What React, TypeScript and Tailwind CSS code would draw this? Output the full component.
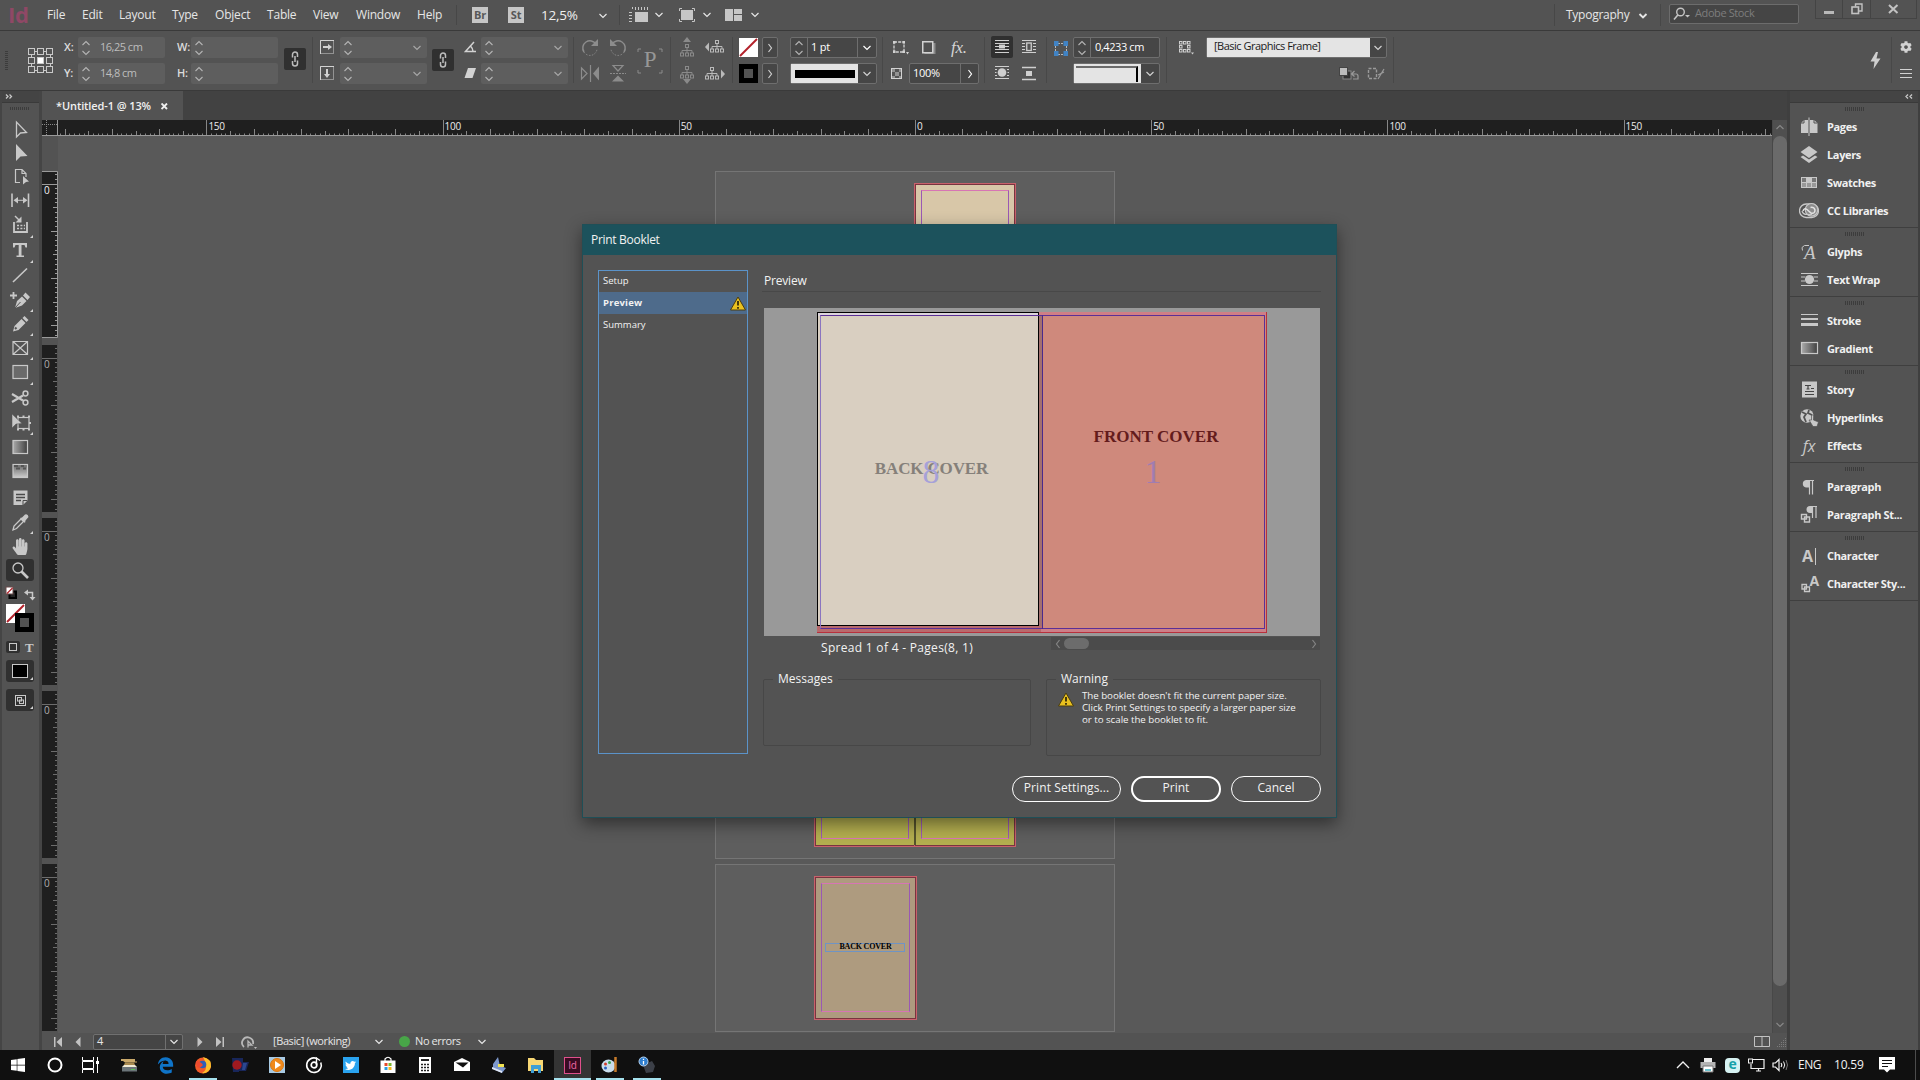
import type { ReactNode } from 'react';
import { FaCog, FaEdgeLegacy, FaHandPaper, FaTwitter, FaWindows } from 'react-icons/fa';

const UNIT = 4.724;

type IconProps = { w?: number; h?: number; className?: string; children: ReactNode };

function Icon({ w = 18, h = 18, className = '', children }: IconProps) {
  return (
    <svg width={w} height={h} viewBox={`0 0 ${w} ${h}`} fill="none" stroke="currentColor" className={`shrink-0 ${className}`}>
      {children}
    </svg>
  );
}

function Chevron({ dir = 'down', className = '' }: { dir?: 'down' | 'right' | 'left' | 'up'; className?: string }) {
  const paths = {
    down: 'M1.5 3 L5 6.5 L8.5 3',
    up: 'M1.5 7 L5 3.5 L8.5 7',
    right: 'M3.5 1 L6.5 5 L3.5 9',
    left: 'M6.5 1 L3.5 5 L6.5 9',
  };
  return (
    <Icon w={10} h={10} className={className}>
      <path d={paths[dir]} strokeWidth="1.2" />
    </Icon>
  );
}

function Stepper() {
  return (
    <Icon w={10} h={18} className="text-[#b4b4b4]">
      <path d="M1.5 6 L5 2.5 L8.500 6 M1.5 12 L5 15.500 L8.500 12" strokeWidth="1.1" />
    </Icon>
  );
}

function Sep({ className = '' }: { className?: string }) {
  return <div className={`h-[46px] w-px shrink-0 bg-[#484848] ${className}`} />;
}

/* ---------- application bar ---------- */

const menus = [
  { label: 'File', w: 'w-[35px]' },
  { label: 'Edit', w: 'w-[37px]' },
  { label: 'Layout', w: 'w-[53px]' },
  { label: 'Type', w: 'w-[43px]' },
  { label: 'Object', w: 'w-[52px]' },
  { label: 'Table', w: 'w-[46px]' },
  { label: 'View', w: 'w-[43px]' },
  { label: 'Window', w: 'w-[61px]' },
  { label: 'Help', w: 'w-[39px]' },
];

function MenuBar() {
  return (
    <div className="flex h-[31px] shrink-0 items-center border-b border-[#3a3a3a] text-[12px] text-[#e6e6e6]">
      <div className="w-[47px] pb-[3px] pl-[8px] text-[22px] leading-none font-bold text-[#8f4866]">Id</div>
      {menus.map((m) => (
        <div key={m.label} className={`${m.w} shrink-0 whitespace-nowrap`}>
          {m.label}
        </div>
      ))}
      <div className="h-[20px] w-px bg-[#474747]" />
      <div className="ml-[15px] flex h-[16px] w-[16px] items-center justify-center bg-[#c6c6c6] text-[11px] font-bold text-[#585858]">Br</div>
      <div className="ml-[20px] flex h-[16px] w-[16px] items-center justify-center bg-[#c6c6c6] text-[11px] font-bold text-[#585858]">St</div>
      <div className="ml-[17px] w-[57px] text-[13.5px] text-[#f0f0f0]">12,5%</div>
      <Chevron className="mt-px" />
      <div className="ml-[11px] h-[20px] w-px bg-[#474747]" />
      <Icon w={20} h={16} className="ml-[9px] text-[#c6c6c6]">
        <path d="M6.500 0 V3 M9.500 0 V3 M12.500 0 V3 M15.500 0 V3 M18.500 0 V3 M0 5.500 H3 M0 8.500 H3 M0 11.500 H3 M0 14.500 H3 M3.500 2 V0" />
        <rect x="6" y="5" width="13" height="10" fill="currentColor" stroke="none" />
      </Icon>
      <Chevron className="ml-[5px]" />
      <Icon w={18} h={16} className="ml-[14px] text-[#c6c6c6]">
        <path d="M1.500 4 V1.500 H4 M14 1.500 H16.500 V4 M16.500 12 V14.500 H14 M4 14.500 H1.500 V12" />
        <rect x="3" y="3" width="12" height="10" fill="currentColor" stroke="none" />
      </Icon>
      <Chevron className="ml-[6px]" />
      <Icon w={17} h={12} className="ml-[13px] text-[#c6c6c6]">
        <path d="M0 0 H8 V12 H0 Z M9 0 H17 V5 H9 Z M9 6 H17 V12 H9 Z" fill="currentColor" stroke="none" />
      </Icon>
      <Chevron className="ml-[8px]" />

      <div className="ml-auto h-[22px] w-px bg-[#474747]" />
      <div className="ml-[11px] w-[72px] text-[12px] tracking-[-0.250px]">Typography</div>
      <Icon w={10} h={10} className="mt-px">
        <path d="M1.500 3 L5 6.500 L8.500 3" strokeWidth="1.900" />
      </Icon>
      <div className="ml-[12px] h-[22px] w-px bg-[#474747]" />
      <div className="-mt-[3px] ml-[8px] flex h-[20px] w-[130px] items-center rounded-[2px] border border-[#6c6c6c] bg-[#454545] text-[11px] text-[#7d7d7d]">
        <Icon w={18} h={14} className="ml-[3px] text-[#c4c4c4]">
          <circle cx="7.500" cy="5" r="3.800" strokeWidth="1.400" />
          <path d="M4.800 8 L1 12.500" strokeWidth="1.600" />
          <path d="M12 8 H17 L14.500 10.500 Z" fill="currentColor" stroke="none" />
        </Icon>
        <span className="ml-[4px] tracking-[-0.4px]">Adobe Stock</span>
      </div>
      <div className="mr-[3px] ml-[16px] flex h-[19px] w-[102px] self-start border border-t-0 border-[#444] text-[#c2c2c2]">
        <div className="flex w-[27px] items-end justify-center border-r border-[#444] pb-[4px]">
          <div className="h-[3px] w-[10px] bg-[#b9b9b9]" />
        </div>
        <div className="flex w-[28px] items-center justify-center border-r border-[#444]">
          <Icon w={12} h={12}>
            <path d="M4.500 3.500 V1 H11 V8 H8" strokeWidth="1.400" />
            <rect x="1" y="4" width="6.500" height="6.500" strokeWidth="1.600" />
          </Icon>
        </div>
        <div className="flex flex-1 items-center justify-center">
          <Icon w={11} h={10}>
            <path d="M1 1 L9.500 9 M9.500 1 L1 9" strokeWidth="2" />
          </Icon>
        </div>
      </div>
    </div>
  );
}

/* ---------- control panel ---------- */

function Pair({ className = '', children }: { className?: string; children: ReactNode }) {
  return <div className={`flex h-[47px] shrink-0 flex-col justify-between ${className}`}>{children}</div>;
}

function DimField({ value = '', arrow = false }: { value?: string; arrow?: boolean }) {
  return (
    <div className="flex h-[21px] w-[87px] items-center rounded-[2px] bg-[#5e5e5e] pl-[3px] text-[11px] tracking-[-0.5px] text-[#bdbdbd]">
      <Stepper />
      <span className="ml-[9px] flex-1 whitespace-nowrap">{value}</span>
      {arrow && <Chevron className="mr-[5px] text-[#a6a6a6]" />}
    </div>
  );
}

function Label({ children }: { children: ReactNode }) {
  return <div className="flex h-[21px] items-center text-[11px] font-semibold text-[#dcdcdc]">{children}</div>;
}

function LinkToggle({ className = '' }: { className?: string }) {
  return (
    <div className={`flex h-[22px] w-[22px] shrink-0 items-center justify-center rounded-[2px] bg-[#303030] ${className}`}>
      <Icon w={10} h={16} className="text-[#bdbdbd]">
        <path d="M2.500 6.500 V3.500 A2.500 2.500 0 0 1 7.500 3.500 V6 M2.500 10 V12.500 A2.500 2.500 0 0 0 7.500 12.500 V9.500 M5 5 V11" strokeWidth="1.500" />
      </Icon>
    </div>
  );
}

function Tree({ variant }: { variant: 'up' | 'down' | 'left' | 'right' }) {
  const bright = variant === 'left' || variant === 'right';
  const arrows = {
    up: 'M9 0 L13 5 H5 Z',
    down: 'M9 20 L13 15 H5 Z',
    left: 'M0 10 L4 5.500 V14.500 Z',
    right: 'M20 10 L16 5.500 V14.500 Z',
  };
  const shift = { up: 'translate(2 4)', down: 'translate(2 -1)', left: 'translate(5 0)', right: 'translate(0 0)' };
  return (
    <Icon w={20} h={20} className={bright ? 'text-[#bababa]' : 'text-[#8a8a8a]'}>
      <path d={arrows[variant]} fill="currentColor" stroke="none" />
      <g transform={shift[variant]}>
        <rect x="5.500" y="3.500" width="3" height="3" />
        <path d="M7 7 V12 M2 12 V9.500 H12 V12" />
        <rect x="0.500" y="12" width="3" height="3" />
        <rect x="5.500" y="12" width="3" height="3" />
        <rect x="10.500" y="12" width="3" height="3" />
      </g>
    </Icon>
  );
}

function WrapIcon({ kind }: { kind: 'none' | 'box' | 'object' | 'jump' }) {
  return (
    <Icon w={14} h={16} className="text-[#cfcfcf]">
      {kind === 'none' && (
        <>
          <path d="M0 1.500 H14 M0 4.500 H14 M0 7.500 H14 M0 10.500 H14 M0 13.500 H14" />
          <path d="M4 5.500 H10 V9.500 H4 Z" fill="currentColor" stroke="none" />
        </>
      )}
      {kind === 'box' && (
        <>
          <path d="M0 1.500 H14 M0 4.500 H3 M11 4.500 H14 M0 7.500 H3 M11 7.500 H14 M0 10.500 H3 M11 10.500 H14 M0 13.500 H14" />
          <rect x="4.750" y="4" width="4.500" height="7.500" strokeWidth="1.300" />
        </>
      )}
      {kind === 'object' && (
        <>
          <path d="M0 1.500 H14 M0 4.500 H2 M12 4.500 H14 M0 7.500 H1.500 M12.500 7.500 H14 M0 10.500 H2 M12 10.500 H14 M0 13.500 H14" />
          <circle cx="7" cy="7.500" r="4.300" fill="currentColor" stroke="none" />
        </>
      )}
      {kind === 'jump' && (
        <>
          <path d="M0 1.500 H14 M0 13.500 H14" strokeWidth="1.500" />
          <rect x="4" y="5" width="6" height="5" fill="currentColor" stroke="none" />
        </>
      )}
    </Icon>
  );
}

function ArrowButton() {
  return (
    <div className="flex h-[21px] w-[16px] items-center justify-center rounded-[2px] border border-[#6e6e6e] bg-[#464646] text-[#cfcfcf]">
      <Chevron dir="right" />
    </div>
  );
}

function StyleIcon() {
  return (
    <Icon w={16} h={15} className="text-[#cfcfcf]">
      {[1.5, 5.5, 9.5].map((y) =>
        [1.5, 5.5, 9.5].map((x) => (x === 5.5 && y === 5.5 ? null : <rect key={`${x}-${y}`} x={x} y={y} width="2.500" height="2.500" />)),
      )}
      <path d="M13 12.500 H16 L14.500 14.500 Z" fill="currentColor" stroke="none" />
    </Icon>
  );
}

function ControlBar() {
  return (
    <div className="flex h-[60px] shrink-0 items-start border-b border-[#3a3a3a] pt-[6px] text-[#d2d2d2]">
      <div className="mt-[14px] ml-[5px] h-[20px] w-[3px] bg-[repeating-linear-gradient(#3c3c3c_0_1px,transparent_1px_2px)]" />
      <Icon w={26} h={26} className="mt-[11px] ml-[20px] text-[#c9c9c9]">
        <path d="M7 3.500 H10 M16 3.500 H19 M7 22.500 H10 M16 22.500 H19 M3.500 7 V10 M3.500 16 V19 M22.500 7 V10 M22.500 16 V19" />
        {[0.5, 9.5, 18.5].map((y) =>
          [0.5, 9.5, 18.5].map((x) => (
            <rect key={`${x}-${y}`} x={x} y={y} width="6" height="6" fill={x === 9.5 && y === 9.5 ? '#fff' : 'none'} />
          )),
        )}
      </Icon>
      <Pair className="ml-[10px] w-[14px]">
        <Label>X:</Label>
        <Label>Y:</Label>
      </Pair>
      <Pair>
        <DimField value="16,25 cm" />
        <DimField value="14,8 cm" />
      </Pair>
      <Pair className="ml-[12px] w-[14px]">
        <Label>W:</Label>
        <Label>H:</Label>
      </Pair>
      <Pair>
        <DimField />
        <DimField />
      </Pair>
      <LinkToggle className="mt-[11px] ml-[6px]" />
      <Sep className="ml-[6px]" />
      <Pair className="ml-[7px] w-[20px] py-[3px]">
        <Icon w={15} h={15}>
          <rect x="0.500" y="0.500" width="13" height="13" strokeDasharray="1 1" />
          <path d="M0.500 14 V0.500 H14" />
          <path d="M3 7 H9" strokeWidth="2" />
          <path d="M8 4 L12 7 L8 10 Z" fill="currentColor" stroke="none" />
        </Icon>
        <Icon w={15} h={15}>
          <rect x="0.500" y="0.500" width="13" height="13" strokeDasharray="1 1" />
          <path d="M0.500 14 V0.500 H14" />
          <path d="M7 3 V9" strokeWidth="2" />
          <path d="M4 8 L7 12 L10 8 Z" fill="currentColor" stroke="none" />
        </Icon>
      </Pair>
      <Pair>
        <DimField arrow />
        <DimField arrow />
      </Pair>
      <LinkToggle className="mt-[12px] ml-[5px]" />
      <Pair className="ml-[10px] w-[17px] py-[4px]">
        <Icon w={13} h={13}>
          <path d="M10 1 L1.500 10.500 H12 M6.500 5 Q9 7.500 9 10.500" strokeWidth="1.500" />
        </Icon>
        <Icon w={13} h={13}>
          <path d="M4 1 H12 L8.500 11 H0.500 Z" fill="currentColor" stroke="none" />
        </Icon>
      </Pair>
      <Pair>
        <DimField arrow />
        <DimField arrow />
      </Pair>
      <Sep className="ml-[5px]" />
      <Pair className="ml-[6px] w-[20px]">
        <Icon w={20} h={21} className="text-[#8c8c8c]">
          <path d="M16 7 A7 7 0 1 0 4 15" strokeWidth="1.500" />
          <path d="M4 15 A7 7 0 0 0 17 12" strokeDasharray="1.500 1.500" />
          <path d="M18 2 V9 H11 Z" fill="currentColor" stroke="none" />
        </Icon>
        <Icon w={20} h={21} className="text-[#8c8c8c]">
          <path d="M1.500 5 L7 10.500 L1.500 16 Z M10.500 2 V19" strokeWidth="1.200" />
          <path d="M19 3.500 V17.500 L13 10.500 Z" fill="currentColor" stroke="none" />
        </Icon>
      </Pair>
      <Pair className="ml-[8px] w-[20px]">
        <Icon w={20} h={21} className="text-[#8c8c8c]">
          <path d="M4 7 A7 7 0 1 1 16 15" strokeWidth="1.500" />
          <path d="M16 15 A7 7 0 0 1 3 12" strokeDasharray="1.500 1.500" />
          <path d="M2 2 V9 H9 Z" fill="currentColor" stroke="none" />
        </Icon>
        <Icon w={20} h={21} className="text-[#8c8c8c]">
          <path d="M5 2.500 H15 L10 8 Z" strokeWidth="1.200" />
          <path d="M2 10.500 H18" strokeDasharray="2 1" />
          <path d="M4 18.500 H16 L10 12.500 Z" fill="currentColor" stroke="none" />
        </Icon>
      </Pair>
      <div className="relative mt-[11px] ml-[9px] flex h-[26px] w-[26px] items-center justify-center pb-[2px] font-['Liberation_Serif',serif] text-[23px] text-[#979797]">
        P
        <Icon w={26} h={26} className="absolute inset-0 text-[#8c8c8c]">
          <path d="M1 4 V1 H4 M22 1 H25 V4 M25 22 V25 H22 M4 25 H1 V22" />
        </Icon>
      </div>
      <Sep className="ml-[7px]" />
      <Pair className="ml-[7px]">
        <Tree variant="up" />
        <Tree variant="down" />
      </Pair>
      <Pair className="ml-[7px]">
        <Tree variant="left" />
        <Tree variant="right" />
      </Pair>
      <Sep className="ml-[7px]" />
      <Pair className="ml-[6px] py-px">
        <Icon w={19} h={19}>
          <rect width="19" height="19" fill="#fff" stroke="none" />
          <path d="M1 18 L18 1" stroke="#b3222b" strokeWidth="2" />
        </Icon>
        <div className="flex h-[19px] w-[19px] items-center justify-center bg-black">
          <div className="h-[9px] w-[9px] bg-[#535353]" />
        </div>
      </Pair>
      <Pair className="ml-[4px]">
        <ArrowButton />
        <ArrowButton />
      </Pair>
      <Pair className="ml-[12px]">
        <div className="flex h-[21px] w-[87px] items-center rounded-[2px] border border-[#6e6e6e] bg-[#464646] text-[11px] text-white">
          <div className="flex h-full w-[17px] items-center justify-center border-r border-[#6e6e6e]">
            <Stepper />
          </div>
          <span className="ml-[3px] flex-1">1 pt</span>
          <div className="flex h-full w-[19px] items-center justify-center border-l border-[#6e6e6e]">
            <Chevron />
          </div>
        </div>
        <div className="flex h-[21px] w-[87px] items-center rounded-[2px] border border-[#6e6e6e] bg-[#464646]">
          <div className="flex h-full w-[67px] items-center justify-center bg-[#e4e4e4]">
            <div className="h-[8px] w-[60px] bg-black" />
          </div>
          <div className="flex flex-1 justify-center">
            <Chevron />
          </div>
        </div>
      </Pair>
      <Sep className="ml-[5px]" />
      <div className="ml-[8px] flex h-[47px] w-[90px] flex-col justify-between">
        <div className="flex h-[21px] items-center">
          <Icon w={18} h={16} className="ml-px">
            <rect x="2" y="2" width="10" height="10" strokeWidth="1.300" strokeDasharray="3 1.200" />
            <path d="M1 1 H3.500 V3.500 H1 Z M10.500 1 H13 V3.500 H10.500 Z M1 10.500 H3.500 V13 H1 Z M10.500 10.500 H13 V13 H10.500 Z" fill="currentColor" stroke="none" />
            <path d="M14 12 H17 L15.500 14.500 Z" fill="currentColor" stroke="none" />
          </Icon>
          <Icon w={16} h={16} className="ml-[11px]">
            <rect x="3.500" y="3" width="11" height="11" fill="#8a8a8a" stroke="none" />
            <rect x="1.750" y="1.750" width="10" height="11" strokeWidth="1.500" fill="#505050" />
          </Icon>
          <span className="ml-[14px] font-['Liberation_Serif',serif] text-[17px] leading-none text-[#d6d6d6] italic">fx.</span>
        </div>
        <div className="flex h-[21px] items-center">
          <Icon w={11} h={11}>
            <path d="M0 0 H4 V4 H0 Z M8 0 H11 V4 H8 Z M4 4 H8 V8 H4 Z M0 8 H4 V11 H0 Z M8 8 H11 V11 H8 Z" fill="currentColor" stroke="none" opacity="0.500" />
            <rect x="0.500" y="0.500" width="10" height="10" />
          </Icon>
          <div className="ml-[7px] flex h-[21px] w-[70px] items-center rounded-[2px] border border-[#6e6e6e] bg-[#464646] pl-[3px] text-[11px] tracking-[-0.300px] text-white">
            <span className="flex-1">100%</span>
            <div className="flex h-full w-[18px] items-center justify-center border-l border-[#6e6e6e]">
              <Chevron dir="right" />
            </div>
          </div>
        </div>
      </div>
      <Sep className="ml-[3px]" />
      <Pair className="-mt-px ml-[6px]">
        <div className="flex h-[22px] w-[22px] items-center justify-center rounded-[2px] bg-[#303030]">
          <WrapIcon kind="none" />
        </div>
        <div className="flex h-[21px] items-center justify-center">
          <WrapIcon kind="object" />
        </div>
      </Pair>
      <Pair className="ml-[9px] pt-[2px] pb-[2px]">
        <WrapIcon kind="box" />
        <WrapIcon kind="jump" />
      </Pair>
      <Sep className="ml-[10px]" />
      <Icon w={16} h={16} className="mt-[4px] ml-[6px]">
        <path d="M5 2.500 H11 M5 13.500 H11 M2.500 5 V11 M13.500 5 V11" stroke="#b9b9b9" strokeDasharray="2 1" />
        <path d="M1 0 H5.500 V5 H1 Z M10.500 0 H15 V5 H10.500 Z M1 10 H5.500 V15 H1 Z M10.500 10 H15 V15 H10.500 Z" fill="#4183c4" stroke="none" />
      </Icon>
      <Pair className="ml-[4px]">
        <div className="flex h-[21px] w-[87px] items-center rounded-[2px] border border-[#6e6e6e] bg-[#464646] text-[11px] text-white">
          <div className="flex h-full w-[17px] items-center justify-center border-r border-[#6e6e6e]">
            <Stepper />
          </div>
          <span className="ml-[4px] tracking-[-0.4px] whitespace-nowrap">0,4233 cm</span>
        </div>
        <div className="flex h-[21px] w-[87px] items-center rounded-[2px] border border-[#6e6e6e] bg-[#464646]">
          <div className="h-full w-[67px] bg-[#e4e4e4] pt-[2px] pl-[2px]">
            <div className="h-[16px] w-[62px] border-t-2 border-r-2 border-t-[#6b6b6b] border-r-black" />
          </div>
          <div className="flex flex-1 justify-center">
            <Chevron />
          </div>
        </div>
      </Pair>
      <Sep className="ml-[6px]" />
      <div className="mt-[3px] ml-[11px]">
        <StyleIcon />
      </div>
      <div className="ml-[12px] flex h-[47px] w-[181px] flex-col justify-between">
        <div className="flex h-[21px] items-center rounded-[2px] border border-[#6e6e6e] bg-[#464646]">
          <div className="flex h-full w-[163px] items-center bg-[#e4e4e4] pb-[2px] pl-[7px] text-[11px] tracking-[-0.5px] text-[#1a1a1a]">[Basic Graphics Frame]</div>
          <div className="flex flex-1 justify-center">
            <Chevron />
          </div>
        </div>
        <div className="flex h-[21px] items-center justify-end gap-[8px] pr-[2px] text-[#9a9a9a]">
          <Icon w={20} h={14}>
            <rect x="4" y="4" width="8" height="8" fill="#333" stroke="#888" />
            <rect x="0.500" y="0.500" width="8" height="8" fill="#bdbdbd" stroke="#444" />
            <path d="M13 7 H17 Q19 7 19 9 V12 H14 M15.500 4 L12.500 7 L15.500 9.500" strokeWidth="1.200" />
          </Icon>
          <Icon w={18} h={14}>
            <rect x="1.500" y="1.500" width="8" height="10" strokeWidth="1.400" strokeDasharray="3 1.500" />
            <path d="M17 2 L11 12 M11 8 L17 5" strokeWidth="1.200" />
          </Icon>
        </div>
      </div>
      <Sep className="ml-[6px]" />
      <Icon w={11} h={17} className="mt-[15px] ml-auto text-[#cfcfcf]">
        <path d="M6 0 L0.500 9.500 H4.500 L3.500 17 L10.500 6.500 H6.500 L8 0 Z" fill="currentColor" stroke="none" />
      </Icon>
      <Sep className="ml-[10px]" />
      <Pair className="mr-[8px] ml-[8px] items-center py-[4px]">
        <FaCog className="h-[12px] w-[12px]" />
        <Icon w={12} h={12}>
          <path d="M0 1.500 H12 M0 5.500 H12 M0 9.500 H12" strokeWidth="1.200" />
        </Icon>
      </Pair>
    </div>
  );
}

/* ---------- tools ---------- */

const tools: { y: string; more?: boolean; art: ReactNode }[] = [
  { y: 'h-[23px]', art: <path d="M5.500 2 V17 L9.500 13 L15.500 12.500 Z" strokeWidth="1.300" /> },
  { y: 'h-[24px]', art: <path d="M5 1 V18 L9.500 13.500 L16.500 13 Z" fill="currentColor" stroke="none" /> },
  {
    y: 'h-[24px]',
    art: (
      <>
        <path d="M9 15.500 H4.500 V2.500 H11 L15 6.500 V10 M11 2.500 V6.500 H15" strokeWidth="1.200" />
        <path d="M12 9 L18 14.500 L15 15 L12 17.500 Z" fill="currentColor" stroke="none" />
      </>
    ),
  },
  {
    y: 'h-[24px]',
    art: (
      <>
        <path d="M1 2.500 V16 M17.500 2.500 V16" strokeWidth="1.600" />
        <path d="M4 9.300 H15" />
        <path d="M2.500 9.300 L7 6 V12.500 Z M16.500 9.300 L12 6 V12.500 Z" fill="currentColor" stroke="none" />
      </>
    ),
  },
  {
    y: 'h-[26px]',
    more: true,
    art: (
      <>
        <path d="M3 7 V17 H16 V7" strokeWidth="1.800" />
        <path d="M6 13.500 H14 M6 10.500 H14" strokeWidth="1.600" strokeDasharray="2 1.400" />
        <path d="M4 1 L8 5" strokeWidth="1.500" />
        <path d="M10.500 1.500 V7.500 H4.500 Z" fill="currentColor" stroke="none" />
      </>
    ),
  },
  {
    y: 'h-[25px]',
    more: true,
    art: <path d="M2 2 H16 V6.500 H14.500 L13.500 4 H10.500 V14.500 H13 V16 H5.500 V14.500 H7.700 V4 H4.500 L3.500 6.500 H2 Z" fill="currentColor" stroke="none" />,
  },
  { y: 'h-[25px]', art: <path d="M2 16 L16 2.500" strokeWidth="1.600" /> },
  {
    y: 'h-[24px]',
    more: true,
    art: (
      <>
        <path d="M2.500 1 V8 M-1 4.500 H6" strokeWidth="1.800" />
        <path d="M4 17 L6 10 L11 5.500 L15.500 10 L11 14.500 Z M12 4.500 L14.500 1.500 L19 6 L16.500 9 Z" fill="currentColor" stroke="none" />
        <path d="M4 17 L9.500 11" stroke="#535353" />
      </>
    ),
  },
  {
    y: 'h-[24px]',
    more: true,
    art: (
      <>
        <path d="M2 16.500 L3.500 11 L10.500 4 L14.500 8 L7.500 15 Z M11.500 3 L13.500 1 L17.500 5 L15.500 7 Z" fill="currentColor" stroke="none" />
        <path d="M4 14 L5.500 12.500" stroke="#535353" strokeWidth="2" />
      </>
    ),
  },
  { y: 'h-[24px]', more: true, art: <path d="M2 2.500 H16.500 V15.500 H2 Z M2 2.500 L16.500 15.500 M16.500 2.500 L2 15.500" strokeWidth="1.200" /> },
  { y: 'h-[25px]', more: true, art: <rect x="2" y="2.500" width="14.500" height="13" strokeWidth="1.200" fill="#6a6a6a" /> },
  {
    y: 'h-[26px]',
    art: (
      <>
        <path d="M1 6 L12 12.500 M1 14 L12 7.500" strokeWidth="2.200" />
        <circle cx="14.500" cy="5.500" r="2.400" strokeWidth="1.500" />
        <circle cx="14.500" cy="14.500" r="2.400" strokeWidth="1.500" />
      </>
    ),
  },
  {
    y: 'h-[24px]',
    more: true,
    art: (
      <>
        <rect x="7" y="3.500" width="11" height="11" strokeWidth="1.200" />
        <path d="M6 2.500 H8 M11.500 2.500 H13.500 M17 2.500 H19 M6 15.500 H8 M11.500 15.500 H13.500 M17 15.500 H19 M19 8 V10" strokeWidth="2" />
        <path d="M1 0 V14 L5 10 L11 9.500 Z" fill="currentColor" stroke="#535353" strokeWidth="0.500" />
      </>
    ),
  },
  { y: 'h-[24px]', art: <rect x="2" y="2.500" width="14.500" height="13" strokeWidth="1.200" fill="url(#grad-tool)" /> },
  {
    y: 'h-[26px]',
    art: (
      <>
        <rect x="2" y="2.500" width="14.500" height="13" strokeWidth="1.200" fill="url(#feather-tool)" />
        <path d="M3 4 H7 M10 4 H13 M5 6.500 H9 M12 6.500 H15" stroke="#555" strokeWidth="2" />
      </>
    ),
  },
  {
    y: 'h-[25px]',
    art: (
      <>
        <path d="M2.500 2.500 H16.500 V12.500 L12 17 H2.500 Z" fill="currentColor" stroke="none" />
        <path d="M5 6.500 H14 M5 9.500 H14 M5 12.500 H10" stroke="#4a4a4a" strokeWidth="1.300" />
        <path d="M12 17 V12.500 H16.500" stroke="#4a4a4a" />
      </>
    ),
  },
  {
    y: 'h-[24px]',
    more: true,
    art: (
      <>
        <path d="M2 17 L3 13 L10 6 L12.500 8.500 L5.500 15.500 Z" strokeWidth="1.300" />
        <path d="M9 5 L11 4.500 L14 1.500 Q17 0.500 17.500 4 L14.500 7.500 L14 10 Z" fill="currentColor" stroke="none" />
      </>
    ),
  },
];

function MoreMark({ className }: { className: string }) {
  return (
    <svg width="3" height="3" viewBox="0 0 3 3" className={`absolute ${className}`}>
      <path d="M3 0 V3 H0 Z" fill="#d2d2d2" />
    </svg>
  );
}

function Toolbox() {
  return (
    <div className="flex w-[42px] shrink-0 flex-col border-x-2 border-r-[3px] border-[#454545] bg-[#535353] text-[#c8c8c8]">
      <svg width="0" height="0" className="absolute">
        <defs>
          <linearGradient id="grad-tool">
            <stop offset="0" stopColor="#aaa" />
            <stop offset="1" stopColor="#404040" />
          </linearGradient>
          <linearGradient id="feather-tool" x2="0" y2="1">
            <stop offset="0" stopColor="#666" />
            <stop offset="1" stopColor="#ccc" />
          </linearGradient>
        </defs>
      </svg>
      <div className="flex h-[12px] shrink-0 items-center border-b border-[#3a3a3a] bg-[#444] pl-[3px]">
        <Icon w={8} h={7}>
          <path d="M1 1.500 L3 3.500 L1 5.500 M4.500 1.500 L6.500 3.500 L4.500 5.500" strokeWidth="1.300" />
        </Icon>
      </div>
      <div className="mt-[4px] mb-[10px] ml-[8px] h-[3px] w-[19px] shrink-0 bg-[repeating-linear-gradient(90deg,#3c3c3c_0_1px,transparent_1px_2px)]" />
      {tools.map((t, i) => (
        <div key={i} className={`relative flex shrink-0 items-start pl-[9px] ${t.y}`}>
          <Icon w={18} h={18} className="overflow-visible">
            {t.art}
          </Icon>
          {t.more && <MoreMark className="right-[6px] bottom-[3px]" />}
        </div>
      ))}
      <div className="flex h-[22px] shrink-0 items-start pt-px pl-[10px]">
        <FaHandPaper className="h-[17px] w-[16px]" />
      </div>
      <div className="ml-[4px] flex h-[22px] w-[28px] shrink-0 items-center justify-center rounded-[3px] bg-[#303030]">
        <Icon w={18} h={18}>
          <circle cx="7" cy="7" r="5" strokeWidth="1.300" />
          <path d="M10.500 10.500 L17 17" strokeWidth="2.600" />
        </Icon>
      </div>
      <div className="mt-[5px] flex shrink-0 items-start pl-[3px]">
        <Icon w={12} h={13}>
          <rect x="4.500" y="5.500" width="6.500" height="6.500" fill="#222" stroke="#000" strokeWidth="2" />
          <rect x="1" y="1" width="7" height="7" fill="#fff" stroke="#6a4a4a" />
          <path d="M2 7.500 L7.500 2" stroke="#b3222b" strokeWidth="1.300" />
        </Icon>
        <Icon w={12} h={13} className="mt-[2px] ml-[7px]">
          <path d="M3 4.500 H8.500 V10" strokeWidth="1.500" />
          <path d="M0 4.500 L4 1.500 V7.500 Z M8.500 12.500 L5.500 9 H11.500 Z" fill="currentColor" stroke="none" />
        </Icon>
      </div>
      <Icon w={28} h={28} className="mt-[3px] ml-[4px]">
        <rect width="19" height="19" fill="#fff" stroke="none" />
        <path d="M1 18 L18 1" stroke="#b3222b" strokeWidth="2" />
        <rect x="9" y="9" width="19" height="19" fill="#000" stroke="none" />
        <rect x="14" y="14" width="9" height="9" fill="#535353" stroke="none" />
      </Icon>
      <div className="mt-[9px] ml-[4px] flex h-[12px] shrink-0 items-center">
        <div className="flex h-[12px] w-[14px] items-center justify-center rounded-[2px] bg-[#303030]">
          <div className="h-[8px] w-[8px] border border-[#c8c8c8]" />
        </div>
        <span className="ml-[5px] font-['Liberation_Serif',serif] text-[13px] leading-none font-bold">T</span>
      </div>
      <div className="relative mt-[7px] ml-[4px] flex h-[22px] w-[28px] shrink-0 items-center justify-center rounded-[3px] bg-[#303030]">
        <div className="h-[14px] w-[16px] border border-[#c8c8c8] bg-black" />
        <MoreMark className="right-px bottom-[2px]" />
      </div>
      <div className="relative mt-[7px] ml-[4px] flex h-[22px] w-[28px] shrink-0 items-center justify-center rounded-[3px] bg-[#303030]">
        <Icon w={11} h={11}>
          <rect x="0.500" y="0.500" width="10" height="10" />
          <rect x="2.500" y="2.500" width="4" height="3.500" />
          <rect x="4.500" y="5" width="4" height="3.500" />
        </Icon>
        <MoreMark className="right-px bottom-[2px]" />
      </div>
    </div>
  );
}

/* ---------- rulers ---------- */

function HorizontalRuler() {
  const zero = 873.5;
  const ticks: { x: number; n: number }[] = [];
  for (let n = -181; n <= 181; n++) {
    const x = zero + n * UNIT;
    if (x > 16) ticks.push({ x, n });
  }
  return (
    <svg width="1730" height="16" className="shrink-0 bg-[#1f1f1f]">
      <path d="M0 4.500 H15 M4.500 0 V16" stroke="#8a8a8a" strokeDasharray="1 1" />
      {ticks.map(({ x, n }) => {
        const len = n % 50 === 0 ? 16 : n % 10 === 0 ? 6 : n % 5 === 0 ? 4 : 1.5;
        const px = Math.floor(x) + 0.5;
        return <path key={n} d={`M${px} 16 V${15 - len}`} stroke="#868686" />;
      })}
      {[-150, -100, -50, 0, 50, 100, 150].map((n) => (
        <text key={n} x={zero + n * UNIT + 1.5} y="9.500" fill="#ececec" fontSize="10" fontWeight="500" letterSpacing="-0.3">
          {Math.abs(n)}
        </text>
      ))}
      <path d="M0 15.500 H1730" stroke="#9a9a9a" />
      <path d="M15.500 0 V16" stroke="#9a9a9a" />
    </svg>
  );
}

const rulerBands = [171, 345, 518, 691, 864];

function VerticalRuler() {
  return (
    <svg width="16" height="897" className="shrink-0 bg-[#535353]">
      {rulerBands.map((top, i) => {
        const y = top - 136;
        const zero = y + 13;
        const color = i === 0 ? '#9a9a9a' : '#6c6c6c';
        return (
          <g key={top} stroke={color}>
            <rect x="0" y={y} width="15" height="167" fill="#1f1f1f" stroke="none" />
            {Array.from({ length: 36 }, (_, k) => {
              const n = k - 2;
              const len = n === 0 ? 15 : n % 10 === 0 ? 6 : n % 5 === 0 ? 4 : 2;
              const py = Math.floor(zero + n * UNIT) + 0.5;
              return py < y + 167 ? <path key={n} d={`M15 ${py} H${15 - len}`} /> : null;
            })}
            {i === 0 && <path d={`M0 ${y + 0.5} H15.500 V${y + 166.500} H0`} fill="none" />}
            <text x="2" y={zero + 10} fill={i === 0 ? '#f4f4f4' : '#b0b0b0'} stroke="none" fontSize="10">
              0
            </text>
          </g>
        );
      })}
    </svg>
  );
}

/* ---------- canvas ---------- */

function Page({ className, children }: { className: string; children?: ReactNode }) {
  return (
    <div className={`absolute border border-[#c8616b] ${className}`}>
      <div className="relative h-full w-full border border-[#7a3440]">
        <div className="absolute inset-x-[5px] top-[5px] bottom-[6px] border border-x-[#9a58b4] border-y-[#d775b4]" />
        {children}
      </div>
    </div>
  );
}

function Canvas() {
  return (
    <div className="relative h-[897px] flex-1 overflow-hidden bg-[#595959]">
      {/* spreads on the pasteboard */}
      <div className="absolute top-[35px] left-[657px] h-[167px] w-[400px] border border-[#757575] bg-[#5e5e5e]" />
      <Page className="top-[47px] left-[856px] h-[145px] w-[102px] bg-[#d8c7a8]" />
      <div className="absolute top-[555px] left-[657px] h-[168px] w-[400px] border border-[#757575] bg-[#5e5e5e]" />
      <Page className="top-[567px] left-[756px] h-[144px] w-[102px] bg-[#b3ae4f]" />
      <Page className="top-[567px] left-[856px] h-[144px] w-[102px] bg-[#b3ae4f]" />
      <div className="absolute top-[575px] left-[856px] h-[134px] w-[2px] bg-[#55532c]" />
      <div className="absolute top-[728px] left-[657px] h-[168px] w-[400px] border border-[#757575] bg-[#5e5e5e]" />
      <Page className="top-[740px] left-[756px] h-[144px] w-[103px] bg-[#ae9b7f]">
        <div className="absolute top-[65px] left-[9px] flex h-[9px] w-[80px] items-center justify-center border border-[#6f94c4] font-['Liberation_Serif',serif] text-[8px] leading-none font-bold whitespace-nowrap text-black">
          <span className="-mt-[2px] ml-px">BACK COVER</span>
        </div>
      </Page>
    </div>
  );
}

function StatusBar() {
  return (
    <div className="flex h-[17px] shrink-0 items-center bg-[#535353] text-[11px] tracking-[-0.3px] text-[#e6e6e6]">
      <Icon w={9} h={10} className="ml-[11px] text-[#c2c2c2]">
        <path d="M1 0 H2.500 V10 H1 Z M9 0 V10 L3.500 5 Z" fill="currentColor" stroke="none" />
      </Icon>
      <Icon w={6} h={10} className="ml-[13px] text-[#c2c2c2]">
        <path d="M5.500 0 V10 L0.500 5 Z" fill="currentColor" stroke="none" />
      </Icon>
      <div className="ml-[12px] flex h-[16px] w-[90px] items-center rounded-[2px] border border-[#707070] bg-[#454545] pl-[3px]">
        <span className="flex-1">4</span>
        <div className="flex h-full w-[17px] items-center justify-center border-l border-[#707070]">
          <Chevron />
        </div>
      </div>
      <Icon w={6} h={10} className="ml-[14px] text-[#c2c2c2]">
        <path d="M0.500 0 V10 L5.500 5 Z" fill="currentColor" stroke="none" />
      </Icon>
      <Icon w={9} h={10} className="ml-[13px] text-[#c2c2c2]">
        <path d="M0 0 V10 L5.500 5 Z M6.500 0 H8 V10 H6.500 Z" fill="currentColor" stroke="none" />
      </Icon>
      <Icon w={18} h={14} className="ml-[15px] text-[#b8b8b8]">
        <path d="M4 12 A5.500 5.500 0 1 1 13 9" strokeWidth="1.800" />
        <path d="M8 12.500 V6 L12 10 H8" strokeWidth="1.300" />
        <path d="M14 12 H17 L15.500 14 Z" fill="currentColor" stroke="none" />
      </Icon>
      <span className="ml-[15px] w-[101px] tracking-[-0.400px] whitespace-nowrap">[Basic] (working)</span>
      <Chevron />
      <div className="ml-[15px] h-[11px] w-[11px] rounded-full bg-[#48a548]" />
      <span className="ml-[5px] w-[62px] tracking-[-0.400px] whitespace-nowrap">No errors</span>
      <Chevron />
      <Icon w={16} h={11} className="mr-[6px] ml-auto text-[#c2c2c2]">
        <path d="M0.500 0.500 H15.500 V10.500 H0.500 Z M8 0.500 V10.500" />
      </Icon>
      <Icon w={10} h={10} className="mr-px text-[#7b7b7b]">
        <path d="M1 9.500 H10 M3 7.500 H10 M5 5.500 H10 M7 3.500 H10 M9 1.500 H10" strokeDasharray="1 1" />
      </Icon>
    </div>
  );
}

/* ---------- panel dock ---------- */

const panelIcons: Record<string, ReactNode> = {
  Pages: (
    <>
      <path d="M2 6 L5 3 H9 V16 H2 Z M11 3 H15 L18.500 6 V16 H11 Z" fill="currentColor" stroke="none" />
      <path d="M10 0.500 V19" />
      <path d="M2 6 H5 V3 M18.500 6 H15 V3" stroke="#535353" />
    </>
  ),
  Layers: (
    <>
      <path d="M10 1 L18.500 7 L10 13 L1.500 7 Z" fill="currentColor" stroke="none" />
      <path d="M1.500 12 L4 10.500 L10 14.500 L16 10.500 L18.500 12 L10 18 Z" fill="currentColor" stroke="none" />
    </>
  ),
  Swatches: (
    <>
      <rect x="2.500" y="4.500" width="15" height="10" fill="#999" />
      <path d="M3 5 H7 V9 H3 Z M13 5 H17 V9 H13 Z" fill="#777" stroke="none" />
      <path d="M2.500 9.500 H17.500 M7.500 4.500 V14.500 M12.500 9.500 V14.500" />
      <rect x="8" y="5" width="5" height="4" fill="currentColor" stroke="none" />
    </>
  ),
  'CC Libraries': (
    <>
      <rect x="0.500" y="3" width="19" height="13.500" rx="6.700" strokeWidth="1.300" />
      <circle cx="12.500" cy="8.800" r="6.300" strokeWidth="1.200" fill="#8c8c8c" />
      <path d="M4 10 Q5 6.500 8 8.500 L12 12 Q16 13 16 9 Q15 5.500 11.500 6.500" strokeWidth="1.500" stroke="#e2e2e2" />
      <path d="M3 10 Q4 13.500 8 13.500 H13" strokeWidth="1.200" />
    </>
  ),
  'Text Wrap': (
    <>
      <path d="M2 3.500 H19 M2 7 H6 M15 7 H19 M2 11 H6 M15 11 H19 M2 15.500 H19" strokeWidth="1.200" />
      <circle cx="10.500" cy="9.500" r="4.600" fill="currentColor" stroke="none" />
    </>
  ),
  Stroke: <path d="M2 3 H19 V4 H2 Z M2 7 H19 V9 H2 Z M2 12 H19 V15 H2 Z" fill="currentColor" stroke="none" />,
  Gradient: <rect x="2.500" y="3.500" width="16" height="11" strokeWidth="1.200" fill="url(#grad-tool)" />,
  Story: (
    <>
      <rect x="3" y="1.500" width="15" height="16" fill="currentColor" stroke="none" />
      <path d="M6 5.500 H12 M9 5 V9 M7.500 9 H10.500 M12 8.500 H15 M6 11.500 H15 M6 14.500 H15" stroke="#444" strokeWidth="1.200" />
    </>
  ),
  Hyperlinks: (
    <>
      <circle cx="8" cy="8" r="6.700" fill="currentColor" stroke="none" />
      <path d="M3 4 L7 6 L5 9 L7 14 M10 2 L9 5 L13 7" stroke="#535353" strokeWidth="1.800" />
      <path d="M12.500 7 V12 L10 12 L14 18.500 H18 L19.500 14 L14.500 12 V7 Z" fill="currentColor" stroke="#535353" strokeWidth="0.700" />
    </>
  ),
  Paragraph: (
    <>
      <path d="M10 3 H7 A3.800 3.800 0 0 0 7 10.500 H10 Z" fill="currentColor" stroke="none" />
      <path d="M9 3.500 H15 M10.500 3 V17.500 M13.500 3 V17.500" strokeWidth="1.200" />
    </>
  ),
  'Paragraph St...': (
    <>
      <path d="M13 1 H11 A3.300 3.300 0 0 0 11 8 H13 Z" fill="currentColor" stroke="none" />
      <path d="M12 1.500 H18 M13.500 1 V13 M17 1 V13" strokeWidth="1.200" />
      <path d="M2.500 9.500 H7.500 V14 H2.500 Z M5.500 12 H10.500 V17 H5.500 Z" strokeWidth="1.400" fill="#535353" />
    </>
  ),
};

const panelGroups = [
  ['Pages', 'Layers', 'Swatches', 'CC Libraries'],
  ['Glyphs', 'Text Wrap'],
  ['Stroke', 'Gradient'],
  ['Story', 'Hyperlinks', 'Effects'],
  ['Paragraph', 'Paragraph St...'],
  ['Character', 'Character Sty...'],
];

function PanelIcon({ name }: { name: string }) {
  if (name === 'Glyphs')
    return (
      <span className="relative w-[20px] pl-[5px] font-['Liberation_Serif',serif] text-[19px] leading-none italic">
        A
        <Icon w={8} h={8} className="absolute top-px left-[2px]">
          <path d="M1.500 6.500 Q-0.500 3 3.500 1.500 H8" />
        </Icon>
      </span>
    );
  if (name === 'Effects') return <span className="w-[20px] text-center font-['Open_Sans',sans-serif] text-[16px] leading-none italic">fx</span>;
  if (name === 'Character')
    return (
      <span className="flex w-[20px] items-center pl-[3px] text-[16px] leading-none font-bold">
        A<span className="ml-[2px] h-[17px] w-px bg-current" />
      </span>
    );
  if (name === 'Character Sty...')
    return (
      <span className="relative flex h-[20px] w-[20px] justify-end text-[14px] leading-none font-bold">
        A
        <Icon w={10} h={10} className="absolute bottom-px left-[2px]">
          <path d="M1 1.500 H5.500 V6 H1 Z M3.500 4 H8.500 V8.500 H3.500 Z" strokeWidth="1.300" fill="#535353" />
        </Icon>
      </span>
    );
  return (
    <Icon w={20} h={20}>
      {panelIcons[name]}
    </Icon>
  );
}

function PanelDock() {
  return (
    <div className="flex w-[133px] shrink-0 flex-col border-r-2 border-l-[3px] border-[#3f3f3f] bg-[#535353]">
      <div className="flex h-[12px] items-center justify-end border-b border-[#3a3a3a] bg-[#444] pr-[5px] text-[#c8c8c8]">
        <Icon w={8} h={7}>
          <path d="M3 1.500 L1 3.500 L3 5.500 M7 1.500 L5 3.500 L7 5.500" strokeWidth="1.300" />
        </Icon>
      </div>
      {panelGroups.map((group) => (
        <div key={group[0]} className="border-b border-[#3f3f3f] pb-[2px]">
          <div className="h-[10px] pt-[4px] pl-[55px]">
            <div className="h-[4px] w-[19px] bg-[repeating-linear-gradient(90deg,#3c3c3c_0_1px,transparent_1px_2px)]" />
          </div>
          {group.map((name) => (
            <div key={name} className="flex h-[28px] items-center gap-[8px] pl-[9px] text-[#c8c8c8]">
              <PanelIcon name={name} />
              <span className="text-[11px] font-bold tracking-[-0.350px] whitespace-nowrap text-[#f0f0f0]">{name}</span>
            </div>
          ))}
        </div>
      ))}
    </div>
  );
}

/* ---------- dialog ---------- */

function WarningIcon() {
  return (
    <Icon w={16} h={15}>
      <path d="M8 1 L15.500 14 H0.500 Z" fill="#e9c11f" stroke="#4a3c10" />
      <path d="M8 5 V9.500 M8 11 V12.800" stroke="#2a2208" strokeWidth="1.700" />
    </Icon>
  );
}

function PrintBooklet() {
  return (
    <div className="absolute top-[224px] left-[582px] flex h-[594px] w-[755px] flex-col border border-[#1f4f57] bg-[#535353] text-[12px] tracking-normal text-[#f2f2f2] shadow-[0_6px_16px_rgba(0,0,0,0.450)]">
      <div className="flex h-[30px] shrink-0 items-center bg-[#1c525c] pl-[8px] tracking-[-0.300px]">Print Booklet</div>
      <div className="flex flex-1 pt-[15px] pl-[15px]">
        <div className="h-[484px] w-[150px] border border-[#5b93c9] text-[9.500px]">
          <div className="flex h-[21px] items-center pl-[4px]">Setup</div>
          <div className="flex h-[22px] items-center justify-between bg-[#4e6b8b] pr-px pl-[4px] font-bold tracking-[0.200px]">
            Preview
            <WarningIcon />
          </div>
          <div className="flex h-[22px] items-center pl-[4px]">Summary</div>
        </div>

        <div className="ml-[14px] flex w-[559px] flex-col">
          <div className="flex h-[22px] items-center border-b border-[#484848] pl-[2px] tracking-[-0.200px]">Preview</div>
          <div className="relative mt-[16px] ml-[2px] h-[328px] w-[556px] shrink-0 bg-[#999]">
            {/* spread: front cover under the trimmed back cover */}
            <div className="absolute top-[4px] left-[53px] h-[321px] w-[450px] border-r border-b border-[#b8303c] bg-[#cf897c]">
              <div className="absolute bottom-0 left-0 h-[6px] w-[225px] bg-[#b86a6c]" />
              <div className="absolute right-0 bottom-0 h-[3px] w-[225px] bg-[#cc7f88]" />
              <div className="absolute top-0 left-[222px] h-[314px] w-[3px] bg-[#a2706f]" />
              <div className="absolute top-0 left-[222px] h-[3px] w-[227px] bg-[#cf7f85]" />
            </div>
            <div className="absolute top-[4px] left-[53px] h-[314px] w-[222px] border border-black bg-[#d9cfc1]">
              <div className="h-[3px] bg-[#dcd4dc]" />
            </div>
            <div className="absolute top-[7px] left-[56px] h-[314px] w-[445px] border border-[#5b2f97] border-l-[#8a74c0]" />
            <div className="absolute top-[7px] left-[278px] h-[314px] w-px bg-[#4a2a8c]" />
            <div className="absolute top-[150px] left-[55px] w-[225px] text-center font-['Liberation_Serif',serif] text-[17px] leading-[22px] font-bold tracking-[-0.150px] text-[#85807a]">BACK COVER</div>
            <div className="absolute top-[147px] left-[56px] w-[222px] text-center font-['Liberation_Serif',serif] text-[34px] leading-[34px] text-[#a6a1d8]">8</div>
            <div className="absolute top-[118px] left-[279px] w-[226px] text-center font-['Liberation_Serif',serif] text-[17px] leading-[22px] font-bold text-[#641c1c]">FRONT COVER</div>
            <div className="absolute top-[147px] left-[276px] w-[226px] text-center font-['Liberation_Serif',serif] text-[34px] leading-[34px] text-[#a07db0]">1</div>
          </div>
          <div className="flex h-[43px] shrink-0 items-start justify-between">
            <span className="mt-[3px] ml-[59px] tracking-[0.300px]">Spread 1 of 4 - Pages(8, 1)</span>
            <div className="mt-px mr-px flex h-[13px] w-[269px] items-center bg-[#4b4b4b] text-[#858585]">
              <Chevron dir="left" className="ml-[2px]" />
              <div className="ml-px h-[11px] w-[25px] rounded-full bg-[#6c6c6c]" />
              <Chevron dir="right" className="mr-px ml-auto" />
            </div>
          </div>
          <div className="flex items-start justify-between pl-px">
            <div className="h-[67px] w-[268px] rounded-[2px] border border-[#474747]">
              <span className="relative -top-[10px] left-[9px] bg-[#535353] px-[5px]">Messages</span>
            </div>
            <div className="h-[77px] w-[275px] rounded-[2px] border border-[#474747]">
              <span className="relative -top-[10px] left-[9px] bg-[#535353] px-[5px]">Warning</span>
              <div className="-mt-[8px] flex pl-[11px]">
                <div className="mt-[2px]">
                  <WarningIcon />
                </div>
                <div className="ml-[8px] text-[9.750px] leading-[12px] tracking-[-0.040px] whitespace-nowrap">
                  The booklet doesn&apos;t fit the current paper size.
                  <br />
                  Click Print Settings to specify a larger paper size
                  <br />
                  or to scale the booklet to fit.
                </div>
              </div>
            </div>
          </div>
          <div className="mt-[20px] flex justify-end gap-[10px]">
            <button className="h-[26px] w-[109px] rounded-full border border-white pb-[2px] tracking-[0.100px]">Print Settings...</button>
            <button className="h-[26px] w-[90px] rounded-full border-2 border-white pb-[2px]">Print</button>
            <button className="h-[26px] w-[90px] rounded-full border border-white pb-[2px]">Cancel</button>
          </div>
        </div>
      </div>
    </div>
  );
}

/* ---------- windows taskbar ---------- */

const taskItems: { active?: boolean; open?: boolean; art: ReactNode }[] = [
  { art: <FaWindows className="h-[16px] w-[16px] text-white" /> },
  {
    art: (
      <Icon>
        <circle cx="9" cy="9" r="6.500" stroke="#fff" strokeWidth="2" />
      </Icon>
    ),
  },
  {
    art: (
      <Icon className="-ml-[3px]">
        <path d="M1.500 1 V4.500 H12.500 V1 M1.500 5.500 H12.500 V12.500 H1.500 Z M1.500 17 V13.500 H12.500 V17 M16.500 1 V17" stroke="#fff" />
        <rect x="15" y="5" width="3" height="3" fill="#fff" stroke="none" />
      </Icon>
    ),
  },
  {
    art: (
      <Icon>
        <path d="M1 3 H15 V5.500 H17 V6.500 H5 L3 5 H1 Z" fill="#c9a86a" stroke="none" />
        <path d="M5 6.500 H14 L15 9 H4 Z" fill="#a88a50" stroke="none" />
        <path d="M4 9 H15 L17 11 H2 Z" fill="#f0ead4" stroke="none" />
        <path d="M2 11 H17 V15.500 H2 Z" fill="#6b7478" stroke="none" />
        <path d="M11 13.500 H15" stroke="#58c058" />
      </Icon>
    ),
  },
  { art: <FaEdgeLegacy className="h-[17px] w-[17px] text-[#0f74c8]" /> },
  {
    open: true,
    art: (
      <Icon>
        <circle cx="9" cy="9.500" r="8" fill="#f25a28" stroke="none" />
        <path d="M9 1 Q18 3 17 11 Q14 18 8 17 Q13 14 12 9 Q11 4 9 1 Z" fill="#fbc02d" stroke="none" />
        <circle cx="8.500" cy="8.500" r="3.800" fill="#2f5fb8" stroke="none" />
        <path d="M2 5 Q6 5 9 9 Q6 13 3 11 Z" fill="#ee4a30" stroke="none" />
      </Icon>
    ),
  },
  {
    art: (
      <Icon>
        <path d="M1 2 H12 V6 H18 L15 15 H8 V16 H2 Z" fill="#18265a" stroke="none" />
        <path d="M12 7 H16 L14 14 H11 Z" fill="#2c4790" stroke="none" />
        <circle cx="6" cy="9" r="4.700" fill="#a01a20" stroke="none" />
      </Icon>
    ),
  },
  {
    art: (
      <Icon>
        <rect x="1" y="1" width="16" height="16" fill="#a9cbe4" stroke="none" />
        <circle cx="9" cy="9" r="6.500" fill="#f08a1c" stroke="#d87814" />
        <path d="M7 5 V13 L13 9 Z" fill="#fff" stroke="none" />
      </Icon>
    ),
  },
  {
    art: (
      <Icon>
        <path d="M15.800 6.500 A7.300 7.300 0 1 1 11.500 2.300" stroke="#fff" strokeWidth="1.600" />
        <circle cx="9" cy="9" r="2.800" stroke="#fff" strokeWidth="1.700" />
        <path d="M11.500 9 V2 L15 4.500" stroke="#fff" strokeWidth="1.400" />
      </Icon>
    ),
  },
  {
    art: (
      <span className="flex h-[16px] w-[16px] items-center justify-center bg-[#2aa3ef]">
        <FaTwitter className="h-[11px] w-[11px] text-white" />
      </span>
    ),
  },
  {
    art: (
      <Icon>
        <path d="M6 5 V3 Q9 -0.500 12 3 V5" stroke="#fff" strokeWidth="1.200" />
        <rect x="1.500" y="4.500" width="15" height="12.500" fill="#fff" stroke="none" />
        <rect x="5.500" y="7" width="3" height="3" fill="#e8492a" stroke="none" />
        <rect x="9.500" y="7" width="3" height="3" fill="#7cb82f" stroke="none" />
        <rect x="5.500" y="11" width="3" height="3" fill="#2a9be0" stroke="none" />
        <rect x="9.500" y="11" width="3" height="3" fill="#f5b81c" stroke="none" />
      </Icon>
    ),
  },
  {
    art: (
      <Icon>
        <rect x="3" y="1" width="12" height="16" fill="#fff" stroke="none" />
        <path d="M5 4 H13" stroke="#222" strokeWidth="2" />
        <path d="M5 8.500 H13 M5 11.500 H13 M5 14.500 H13" stroke="#222" strokeWidth="1.700" strokeDasharray="2 1" />
      </Icon>
    ),
  },
  {
    art: (
      <Icon>
        <path d="M1 6 L9 2 L17 6 V15 H1 Z" fill="#fff" stroke="none" />
        <path d="M2.500 6.500 H15.500 L10 11.500 Z" fill="#111" stroke="none" />
      </Icon>
    ),
  },
  {
    art: (
      <Icon>
        <path d="M8 1 L3 8 L3 13 L12 17 L16 12 L10 10 Z" fill="#7d98cc" stroke="none" />
        <path d="M8 8 H14 V11 H8 Z" fill="#f1e352" stroke="none" />
        <path d="M2 11 L12 15 V17 L2 13 Z" fill="#dfe7f5" stroke="none" />
      </Icon>
    ),
  },
  {
    art: (
      <Icon>
        <path d="M1 2 H7 L9 4 H16 V15 H1 Z" fill="#f7d774" stroke="none" />
        <path d="M4 17 V9 H14 V17 H11 V13 H7 V17 Z" fill="#3f9fd6" stroke="none" />
      </Icon>
    ),
  },
  {
    active: true,
    open: true,
    art: (
      <span className="flex h-[17px] w-[17px] items-center justify-center border border-[#e0508c] bg-[#3a0c22] pb-px text-[10px] leading-none text-[#f06aa4]">Id</span>
    ),
  },
  {
    open: true,
    art: (
      <Icon>
        <ellipse cx="7.500" cy="10" rx="7" ry="6.500" fill="#c8dcec" stroke="none" />
        <circle cx="4.500" cy="8" r="1.500" fill="#d23a2a" stroke="none" />
        <circle cx="8.500" cy="6.500" r="1.500" fill="#3aa04a" stroke="none" />
        <circle cx="4.500" cy="12" r="1.500" fill="#2a60c0" stroke="none" />
        <path d="M14.500 1 V16" stroke="#c67a2a" strokeWidth="2.500" />
      </Icon>
    ),
  },
  {
    open: true,
    art: (
      <Icon>
        <path d="M5 9 L14 5 L17 10 L15 16 L8 17 Z" fill="#3c4048" stroke="none" />
        <circle cx="5.500" cy="5.500" r="4.500" fill="#2f7fd0" stroke="#b8d4f0" />
        <path d="M5.500 5 V8.500 M5.500 2.800 V4" stroke="#fff" strokeWidth="1.300" />
      </Icon>
    ),
  },
];

function Taskbar() {
  return (
    <div className="flex h-[30px] shrink-0 items-center bg-[#101010] text-[12px] text-[#f2f2f2]">
      <div className="-ml-px flex h-full">
        {taskItems.map((item, i) => (
          <div key={i} className={`relative flex h-full w-[37px] shrink-0 items-center justify-center ${item.active ? 'bg-[#343434]' : ''}`}>
            {item.art}
            {item.open && <div className={`absolute bottom-0 h-[2px] bg-[#a6e2ee] ${item.active ? 'w-full' : 'w-[28px]'}`} />}
          </div>
        ))}
      </div>
      <div className="ml-auto flex items-center">
        <Icon w={14} h={10}>
          <path d="M1 8 L7 2 L13 8" strokeWidth="1.300" />
        </Icon>
        <Icon w={16} h={16} className="ml-[10px]">
          <path d="M4 1 H12 V5 H4 Z" fill="#eee" stroke="none" />
          <path d="M0.500 5 H15.500 V11 H0.500 Z" fill="#b4b4b4" stroke="none" />
          <path d="M3 9 H13 V15 H3 Z" fill="#fff" stroke="#777" />
          <path d="M5 13 H11" stroke="#3cb0c0" strokeWidth="1.500" />
        </Icon>
        <span className="ml-[9px] flex h-[15px] w-[15px] items-center justify-center rounded-[4px] bg-[#d6f2f2] pb-[2px] text-[14px] leading-none font-bold text-[#17a0a8]">e</span>
        <Icon w={17} h={14} className="ml-[8px]">
          <path d="M5 1.500 H16 V10.500 H3 V6 M8 13 H13 M10.500 10.500 V13" strokeWidth="1.200" />
          <rect x="0.500" y="1" width="4" height="4" />
        </Icon>
        <Icon w={17} h={14} className="ml-[7px]">
          <path d="M1 5 H3.500 L7 1.500 V12.500 L3.500 9 H1 Z M9 5 Q10.500 7 9 9" strokeWidth="1.200" />
          <path d="M11.500 3.500 Q14 7 11.500 10.500" />
          <path d="M14 2 Q17 7 14 12" stroke="#777" />
        </Icon>
        <span className="ml-[9px] w-[36px] tracking-[-0.450px]">ENG</span>
        <span className="w-[45px] whitespace-nowrap">10.59</span>
        <Icon w={16} h={16}>
          <path d="M0 0 H16 V12.500 H11 L8 15.500 L5 12.500 H0 Z" fill="#fff" stroke="none" />
          <path d="M3 3.500 H13 M3 6.500 H13 M3 9.500 H9" stroke="#111" />
        </Icon>
        <div className="mr-[4px] ml-[20px] h-[30px] w-px bg-[#4c4c4c]" />
      </div>
    </div>
  );
}

export default function App() {
  return (
    <div className="relative flex h-[1080px] w-[1920px] flex-col overflow-hidden bg-[#535353] font-['Open_Sans','Noto_Sans',sans-serif] leading-normal tracking-[-0.2px]">
      <MenuBar />
      <ControlBar />
      <div className="flex min-h-0 flex-1">
        <Toolbox />
        <div className="flex w-[1745px] flex-col">
          <div className="flex h-[29px] shrink-0 bg-[#424242]">
            <div className="flex w-[141px] items-center bg-[#535353] pt-px pl-[14px] text-[11px] font-semibold tracking-[-0.1px] text-[#f0f0f0]">
              *Untitled-1 @ 13%
              <Icon w={7} h={7} className="ml-[10px]">
                <path d="M0.500 0.500 L6 6 M6 0.500 L0.500 6" strokeWidth="1.900" />
              </Icon>
            </div>
          </div>
          <div className="flex h-[913px] shrink-0">
            <div className="flex w-[1730px] flex-col">
              <HorizontalRuler />
              <div className="flex h-[897px]">
                <VerticalRuler />
                <Canvas />
              </div>
            </div>
            <div className="flex w-[15px] flex-col items-center border-l border-[#484848] bg-[#4f4f4f] text-[#888]">
              <Chevron dir="up" className="mt-[2px]" />
              <div className="mt-[4px] h-[850px] w-[14px] rounded-full bg-[#6a6a6a]" />
              <Chevron className="mt-auto mb-[3px]" />
            </div>
          </div>
          <StatusBar />
        </div>
        <PanelDock />
      </div>
      <Taskbar />
      <PrintBooklet />
    </div>
  );
}
